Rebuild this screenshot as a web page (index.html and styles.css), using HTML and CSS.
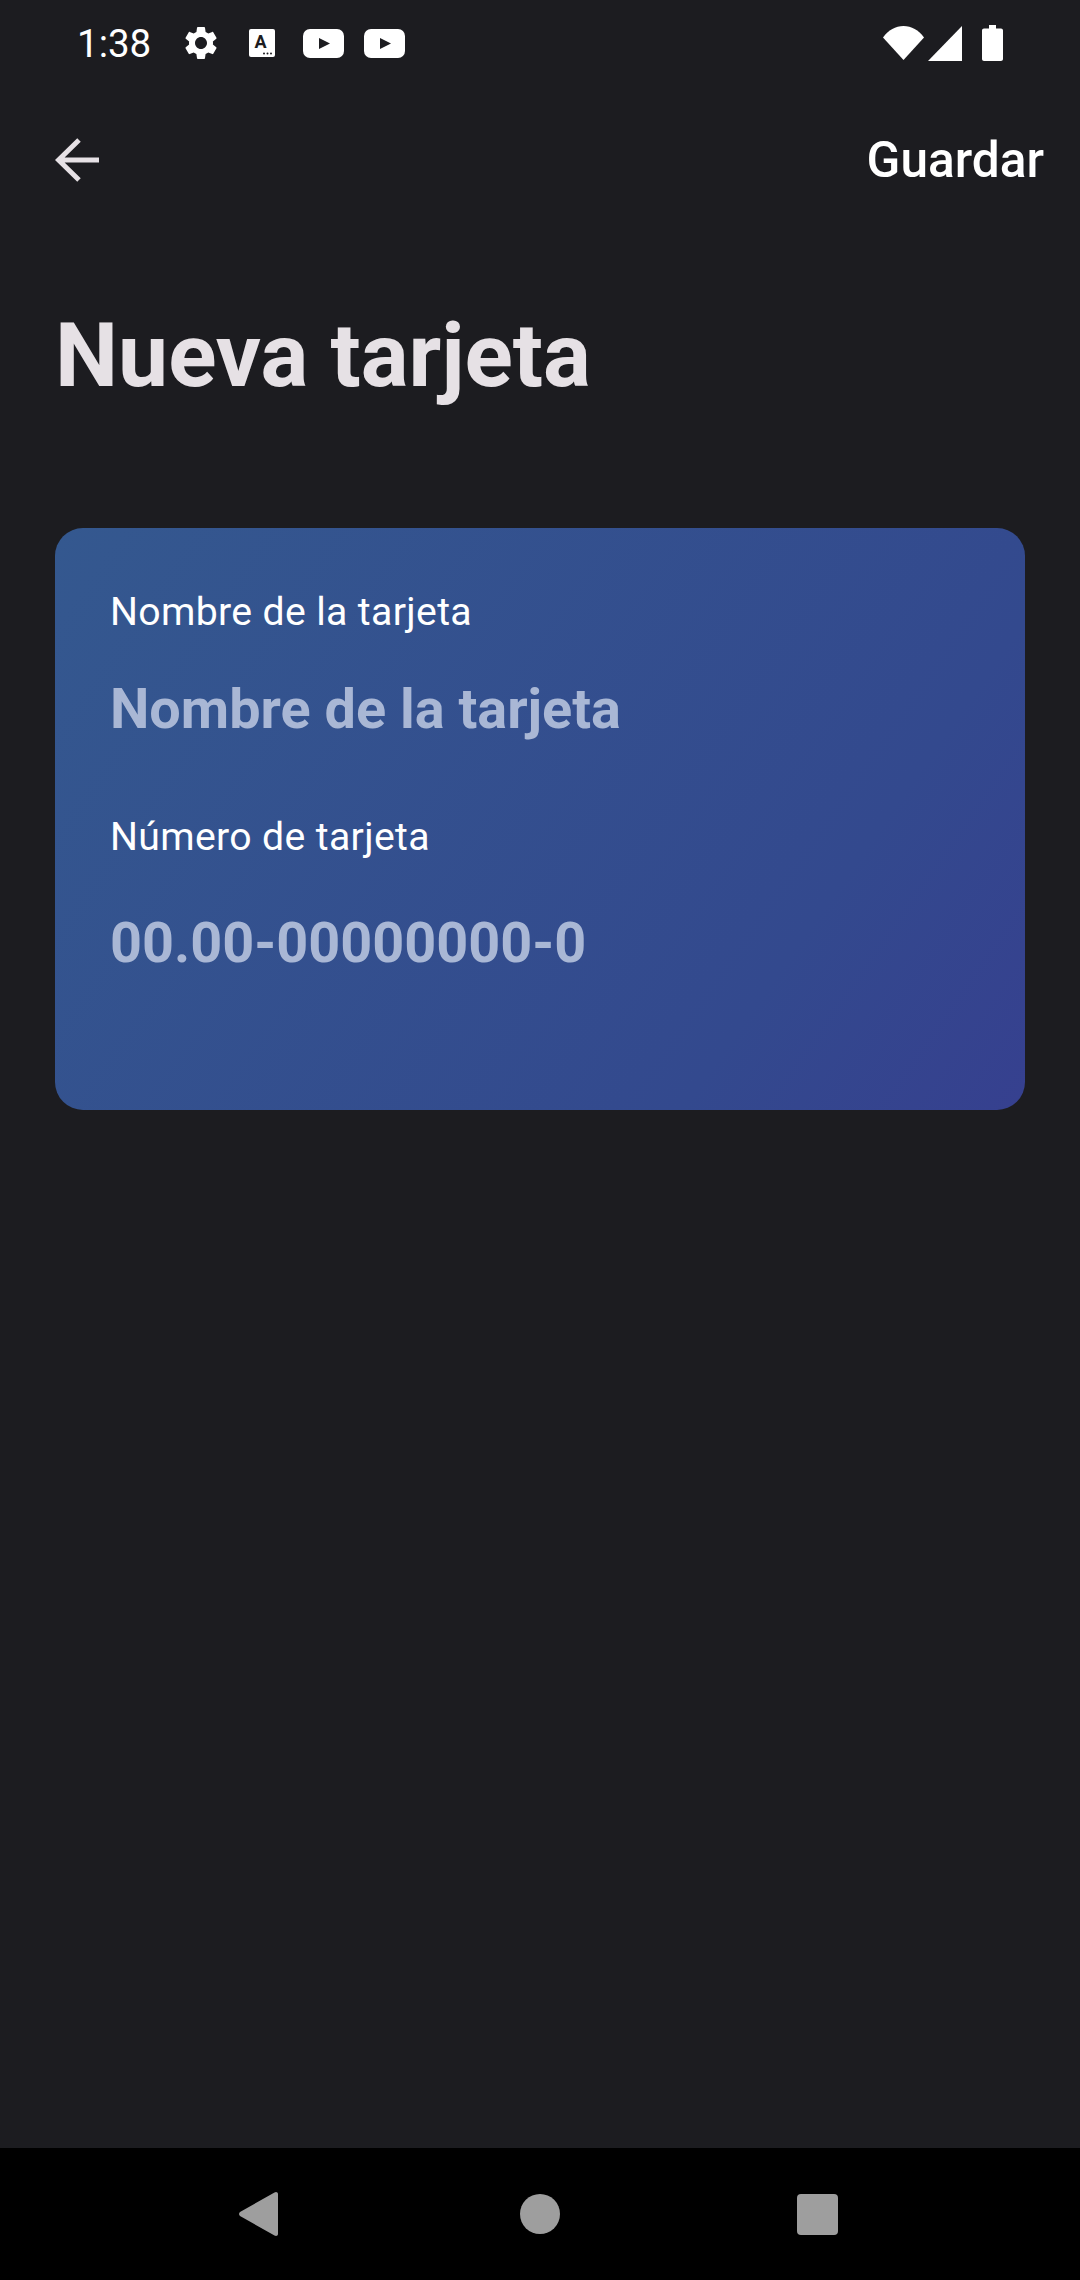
FILE: index.html
```html
<!DOCTYPE html>
<html lang="es">
  <head>
    <meta charset="UTF-8" />
    <meta name="viewport" content="width=device-width, initial-scale=1.0" />
    <title>Nueva tarjeta</title>
    <link rel="stylesheet" href="styles.css">
  </head>
  <body>
    <div class="status-bar">
      <span class="time">1:38</span>
      <svg class="ic-gear" viewBox="0 0 24 24"><path fill="#fff" d="M19.14 12.94c.04-.3.06-.61.06-.94 0-.32-.02-.64-.07-.94l2.03-1.58c.18-.14.23-.41.12-.61l-1.92-3.32c-.12-.22-.37-.29-.59-.22l-2.39.96c-.5-.38-1.03-.7-1.62-.94l-.36-2.54c-.04-.24-.24-.41-.48-.41h-3.84c-.24 0-.43.17-.47.41l-.36 2.54c-.59.24-1.13.57-1.62.94l-2.39-.96c-.22-.08-.47 0-.59.22L2.74 8.87c-.12.21-.08.47.12.61l2.03 1.58c-.05.3-.09.63-.09.94s.02.64.07.94l-2.03 1.58c-.18.14-.23.41-.12.61l1.92 3.32c.12.22.37.29.59.22l2.39-.96c.5.38 1.03.7 1.62.94l.36 2.54c.05.24.24.41.48.41h3.84c.24 0 .44-.17.47-.41l.36-2.54c.59-.24 1.13-.56 1.62-.94l2.39.96c.22.08.47 0 .59-.22l1.92-3.32c.12-.22.07-.47-.12-.61l-2.01-1.58zM12 15.6c-1.98 0-3.6-1.62-3.6-3.6s1.62-3.6 3.6-3.6 3.6 1.62 3.6 3.6-1.62 3.6-3.6 3.6z"/></svg>
      <svg class="ic-font" viewBox="0 0 26 28">
        <rect width="26" height="28" rx="2" fill="#fff"/>
        <text x="11.5" y="19" text-anchor="middle" class="ic-font-a">A</text>
        <circle cx="15" cy="24.5" r="1" fill="#1c1c20"/>
        <circle cx="18.5" cy="24.5" r="1" fill="#1c1c20"/>
        <circle cx="22" cy="24.5" r="1" fill="#1c1c20"/>
      </svg>
      <svg class="ic-yt" viewBox="0 0 41 29">
        <rect width="41" height="29" rx="7" fill="#fff"/>
        <path fill="#1c1c20" d="M16 9l11 5.5L16 20z"/>
      </svg>
      <svg class="ic-yt" viewBox="0 0 41 29">
        <rect width="41" height="29" rx="7" fill="#fff"/>
        <path fill="#1c1c20" d="M16 9l11 5.5L16 20z"/>
      </svg>
      <div class="status-right">
        <svg class="ic-wifi" viewBox="0 0 41 34"><path fill="#fff" d="M0 11.5C5.5 4 12.5 0 20.500 0S35.500 4 41 11.500L20.500 34z"/></svg>
        <svg class="ic-signal" viewBox="0 0 34 35"><path fill="#fff" d="M34 0v35H0z"/></svg>
        <svg class="ic-battery" viewBox="0 0 21 36"><path fill="#fff" d="M7 0h7v3.500h5c1.100 0 2 .9 2 2V34c0 1.100-.9 2-2 2H2c-1.100 0-2-.9-2-2V5.500c0-1.100.9-2 2-2h5z"/></svg>
      </div>
    </div>

    <div class="toolbar">
      <svg class="ic-back" viewBox="0 0 44 44"><path fill="none" stroke="#e6e1e5" stroke-width="5" d="M44 22H4M24 2L3.500 22L24 42"/></svg>
      <span class="save">Guardar</span>
    </div>

    <h1 class="title">Nueva tarjeta</h1>

    <div class="card">
      <div class="field-label">Nombre de la tarjeta</div>
      <div class="field-value field-name">Nombre de la tarjeta</div>
      <div class="field-label">Número de tarjeta</div>
      <div class="field-value field-number">00.00-00000000-0</div>
    </div>

    <div class="nav-bar">
      <svg class="nav-back" viewBox="0 0 39 44"><path fill="#9e9e9e" d="M37 0c1 0 2 .8 2 2v40c0 1.200-1 2-2 2-.5 0-1-.2-1.500-.5L1 24c-1.300-1-1.300-3 0-4L35.500.5C36 .2 36.500 0 37 0z"/></svg>
      <div class="nav-home"></div>
      <div class="nav-recent"></div>
    </div>
  </body>
</html>
```

FILE: styles.css
```css
* {
  margin: 0;
  padding: 0;
  box-sizing: border-box;
}

html, body {
  height: 2280px;
}

body {
  width: 1080px;
  background: #1c1c20;
  font-family: Roboto, "Liberation Sans", sans-serif;
  display: flex;
  flex-direction: column;
  overflow: hidden;
}

svg {
  display: block;
  flex: none;
}

.status-bar {
  height: 88px;
  padding: 0 77px 2px 77px;
  display: flex;
  align-items: center;
  color: white;
}

.time {
  font-size: 38.5px;
  width: 104px;
}

.ic-gear {
  width: 40px;
  height: 40px;
  margin-right: 28px;
}

.ic-font {
  width: 26px;
  height: 28px;
  margin-right: 28px;
}

.ic-font-a {
  font-family: Roboto, sans-serif;
  font-size: 18px;
  font-weight: 700;
  fill: #1c1c20;
}

.ic-yt {
  width: 41px;
  height: 29px;
  margin-right: 20px;
}

.status-right {
  margin-left: auto;
  display: flex;
  align-items: center;
}

.ic-wifi {
  width: 41px;
  height: 34px;
  margin-right: 4px;
}

.ic-signal {
  width: 34px;
  height: 35px;
  margin-right: 20px;
}

.ic-battery {
  width: 21px;
  height: 36px;
}

.toolbar {
  height: 144px;
  padding: 0 36px 0 55px;
  display: flex;
  align-items: center;
  justify-content: space-between;
}

.ic-back {
  width: 44px;
  height: 44px;
}

.save {
  font-size: 49.6px;
  font-weight: 500;
  color: white;
}

.title {
  font-size: 89.4px;
  font-weight: 700;
  line-height: 104px;
  color: #e6e1e5;
  padding-left: 55px;
  margin-top: 72px;
}

.card {
  width: 970px;
  height: 582px;
  margin: 120px 0 0 55px;
  padding: 60px 55px;
  border-radius: 28px;
  background: linear-gradient(125deg, #34588f 0%, #33498e 75%, #36408f 100%);
}

.field-label {
  font-size: 39.2px;
  letter-spacing: 0.35px;
  line-height: 48px;
  color: white;
}

.field-value {
  font-size: 55.8px;
  font-weight: 700;
  line-height: 64px;
  color: #a9b7d5;
}

.field-name {
  margin: 41px 0 72px;
}

.field-number {
  margin-top: 50px;
}

.nav-bar {
  margin-top: auto;
  height: 132px;
  background: black;
  padding-left: 239px;
  display: flex;
  align-items: center;
}

.nav-back {
  width: 39px;
  height: 44px;
}

.nav-home {
  width: 40px;
  height: 40px;
  margin-left: 242px;
  border-radius: 50%;
  background: #9e9e9e;
}

.nav-recent {
  width: 41px;
  height: 41px;
  margin-left: 237px;
  border-radius: 4px;
  background: #9e9e9e;
}
```
